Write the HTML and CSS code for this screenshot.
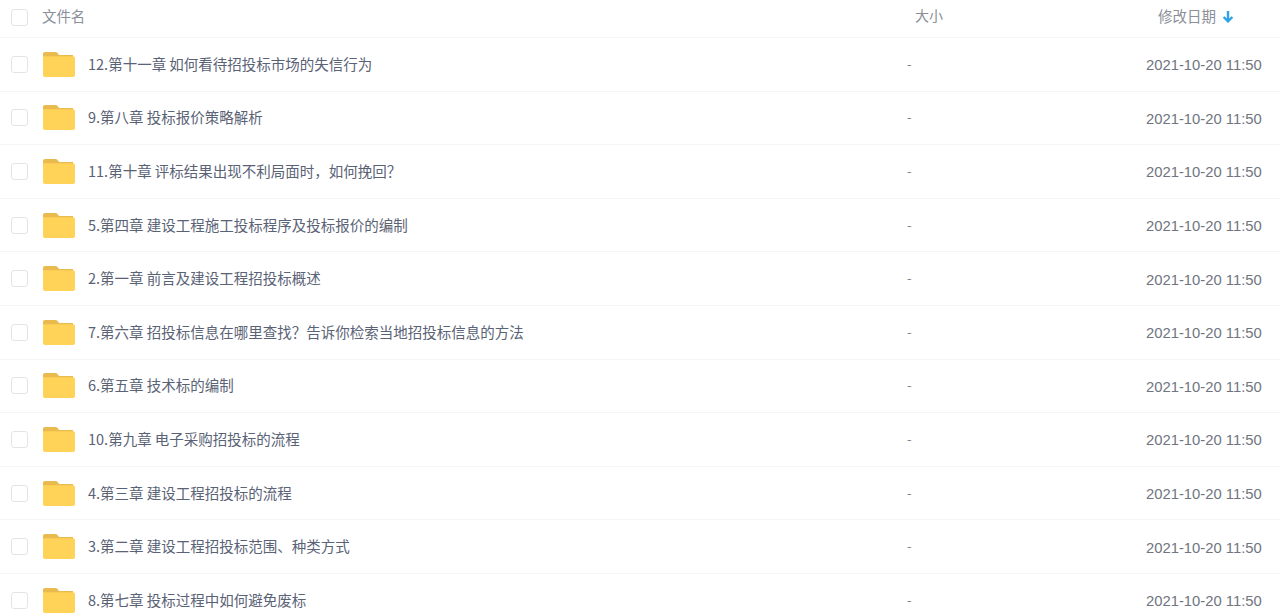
FILE: index.html

```html
<!DOCTYPE html>
<html lang="zh-CN">
<head>
  <meta charset="UTF-8" />
  <title>文件列表</title>
  <link rel="stylesheet" href="styles.css">
</head>
<body>
  <svg class="defs" width="0" height="0">
    <symbol id="folder" viewBox="0 0 32 26" preserveAspectRatio="none">
      <path fill="#e9bb4e" d="M2 0h10c1.200 0 2 .5 2.800 1.400L16 3H30v6H0V2C0 .8.800 0 2 0z"/>
      <path fill="#ffd258" d="M0 4.500h30c1.200 0 2 .8 2 2V24c0 1.200-.8 2-2 2H2c-1.200 0-2-.8-2-2z"/>
    </symbol>
  </svg>

  <div class="list">
    <div class="row head">
      <span class="check"></span>
      <span class="name">文件名</span>
      <span class="size">大小</span>
      <span class="date">修改日期
        <svg class="arrow" width="12" height="12" viewBox="0 0 11 11"><path d="M5.500 0v9.500M1.500 5.500l4 4 4-4" fill="none" stroke="#2ea3e6" stroke-width="2.200"/></svg>
      </span>
    </div>

    <div class="row">
      <span class="check"></span>
      <svg class="folder"><use href="#folder"/></svg>
      <span class="name">12.第十一章 如何看待招投标市场的失信行为</span>
      <span class="size">-</span>
      <span class="date">2021-10-20 11:50</span>
    </div>
    <div class="row">
      <span class="check"></span>
      <svg class="folder"><use href="#folder"/></svg>
      <span class="name">9.第八章 投标报价策略解析</span>
      <span class="size">-</span>
      <span class="date">2021-10-20 11:50</span>
    </div>
    <div class="row">
      <span class="check"></span>
      <svg class="folder"><use href="#folder"/></svg>
      <span class="name">11.第十章 评标结果出现不利局面时，如何挽回？</span>
      <span class="size">-</span>
      <span class="date">2021-10-20 11:50</span>
    </div>
    <div class="row">
      <span class="check"></span>
      <svg class="folder"><use href="#folder"/></svg>
      <span class="name">5.第四章 建设工程施工投标程序及投标报价的编制</span>
      <span class="size">-</span>
      <span class="date">2021-10-20 11:50</span>
    </div>
    <div class="row">
      <span class="check"></span>
      <svg class="folder"><use href="#folder"/></svg>
      <span class="name">2.第一章 前言及建设工程招投标概述</span>
      <span class="size">-</span>
      <span class="date">2021-10-20 11:50</span>
    </div>
    <div class="row">
      <span class="check"></span>
      <svg class="folder"><use href="#folder"/></svg>
      <span class="name">7.第六章 招投标信息在哪里查找？告诉你检索当地招投标信息的方法</span>
      <span class="size">-</span>
      <span class="date">2021-10-20 11:50</span>
    </div>
    <div class="row">
      <span class="check"></span>
      <svg class="folder"><use href="#folder"/></svg>
      <span class="name">6.第五章 技术标的编制</span>
      <span class="size">-</span>
      <span class="date">2021-10-20 11:50</span>
    </div>
    <div class="row">
      <span class="check"></span>
      <svg class="folder"><use href="#folder"/></svg>
      <span class="name">10.第九章 电子采购招投标的流程</span>
      <span class="size">-</span>
      <span class="date">2021-10-20 11:50</span>
    </div>
    <div class="row">
      <span class="check"></span>
      <svg class="folder"><use href="#folder"/></svg>
      <span class="name">4.第三章 建设工程招投标的流程</span>
      <span class="size">-</span>
      <span class="date">2021-10-20 11:50</span>
    </div>
    <div class="row">
      <span class="check"></span>
      <svg class="folder"><use href="#folder"/></svg>
      <span class="name">3.第二章 建设工程招投标范围、种类方式</span>
      <span class="size">-</span>
      <span class="date">2021-10-20 11:50</span>
    </div>
    <div class="row">
      <span class="check"></span>
      <svg class="folder"><use href="#folder"/></svg>
      <span class="name">8.第七章 投标过程中如何避免废标</span>
      <span class="size">-</span>
      <span class="date">2021-10-20 11:50</span>
    </div>
  </div>
</body>
</html>
```

FILE: styles.css

```css
* {
  box-sizing: border-box;
}
html, body {
  height: 100%;
}
body {
  margin: 0;
  background: #fff;
  color: #5a6275;
  font-family: "Noto Sans CJK SC", "Liberation Sans", sans-serif;
  font-size: 14.5px;
  overflow: hidden;
}
.defs {
  position: absolute;
}
.row {
  display: flex;
  align-items: center;
  height: 53.6px;
  padding-left: 11px;
  border-bottom: 1px solid #f5f5f6;
}
.head {
  height: 38px;
  padding-bottom: 3px;
  color: #8a8f99;
}
.check {
  flex: none;
  width: 17px;
  height: 17px;
  margin-right: 14px;
  border: 1px solid #e3e4e7;
  border-radius: 3px;
}
.folder {
  flex: none;
  width: 32px;
  height: 25px;
  margin-left: 1px;
  margin-right: 13px;
}
.name {
  flex: 1;
  padding-bottom: 2px;
  white-space: nowrap;
}
.head .name {
  padding-bottom: 4px;
  font-size: 14.4px;
}
.size {
  flex: none;
  width: 239px;
  padding-bottom: 2px;
  color: #7d818c;
  font-size: 13px;
}
.date {
  flex: none;
  width: 134px;
  padding-top: 2px;
  color: #707580;
  font-family: "Liberation Sans", "Noto Sans CJK SC", sans-serif;
  font-size: 14.8px;
}
.head .size {
  padding-left: 8px;
  padding-bottom: 4px;
  color: #8a8f99;
  font-size: 14px;
}
.head .date {
  padding-top: 0;
  padding-left: 12px;
  padding-bottom: 4px;
  color: #8a8f99;
  font-family: "Noto Sans CJK SC", sans-serif;
  font-size: 14.5px;
}
.arrow {
  margin-left: 3px;
  vertical-align: -1px;
}
```
